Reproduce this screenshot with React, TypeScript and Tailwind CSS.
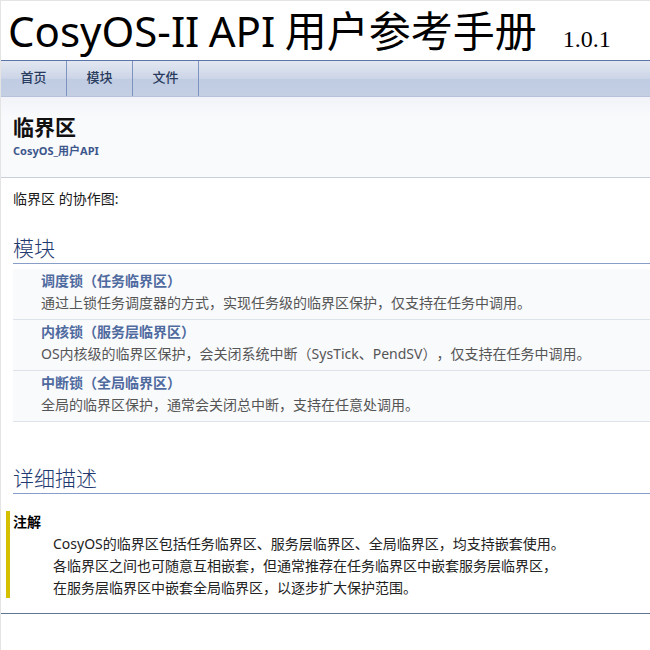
const FONT = "font-['Noto_Sans','Noto_Sans_CJK_SC',sans-serif]";

const tabs = ['首页', '模块', '文件'];

const modules = [
  { name: '调度锁（任务临界区）', desc: '通过上锁任务调度器的方式，实现任务级的临界区保护，仅支持在任务中调用。' },
  { name: '内核锁（服务层临界区）', desc: 'OS内核级的临界区保护，会关闭系统中断（SysTick、PendSV），仅支持在任务中调用。' },
  { name: '中断锁（全局临界区）', desc: '全局的临界区保护，通常会关闭总中断，支持在任意处调用。' },
];

function Heading({ children }: { children: string }) {
  return (
    <h2 className="ml-[12px] h-[29px] border-b border-[#879ecb] text-[21px] leading-[26px] font-light text-[#1f3a70]">
      {children}
    </h2>
  );
}

export default function App() {
  return (
    <div className={`${FONT} h-[650px] w-[650px] overflow-hidden border-t border-l border-[#e4e4e4] bg-white text-[#1a1a1a] [text-spacing-trim:space-all]`}>
      {/* title */}
      <div className="flex h-[59px] items-center pl-[7px] text-black">
        <span className="text-[42px] leading-[57px] [word-spacing:-1.5px]">CosyOS-II API 用户参考手册</span>
        <span className="mt-[17px] ml-[26px] font-['Liberation_Serif',serif] text-[24px] leading-none">1.0.1</span>
      </div>

      {/* tabs */}
      <nav className="flex h-[37px] border-t border-b border-t-[#5c75a8] border-b-[#b5c2da] bg-[linear-gradient(#e2e7f1_0%,#ccd5e7_50%,#c0cce2_52%,#c4cfe4_100%)]">
        {tabs.map((tab) => (
          <div key={tab} className="flex w-[66px] items-center justify-center border-r border-[#7d94c0] pb-[2px] text-[13px] font-medium text-[#283a5d]">
            {tab}
          </div>
        ))}
      </nav>

      {/* page header */}
      <header className="h-[81px] border-b border-[#c9cfda] bg-[linear-gradient(#f1f3f8_0px,#f9fafc_20px)] pl-[12px] pt-[15px]">
        <h1 className="text-[21px] leading-[30px] font-bold text-[#111]">临界区</h1>
        <div className="mt-[2px] text-[11px] leading-[14px] font-bold text-[#3d578c]">CosyOS_用户API</div>
      </header>

      <p className="mt-[12px] ml-[12px] text-[14px] leading-[18px]">临界区 的协作图:</p>

      <div className="mt-[27px]">
        <Heading>模块</Heading>
      </div>

      <div className="ml-[12px] mt-[5px]">
        {modules.map((m) => (
          <div key={m.name} className="h-[51px] border-b border-[#dee2ea] bg-[#f9fafc] pl-[28px] pt-[1px]">
            <div className="text-[14px] leading-[22px] font-bold text-[#4f6a9f]">{m.name}</div>
            <div className="text-[14px] leading-[22px] text-[#555]">{m.desc}</div>
          </div>
        ))}
      </div>

      <div className="mt-[43px]">
        <Heading>详细描述</Heading>
      </div>

      {/* note */}
      <div className="ml-[5px] mt-[17px] h-[87px] border-l-4 border-[#d5c000] pl-[3px]">
        <div className="text-[14px] leading-[22px] font-bold text-black">注解</div>
        <div className="ml-[40px] text-[14px] leading-[22px] text-[#222]">
          <p>CosyOS的临界区包括任务临界区、服务层临界区、全局临界区，均支持嵌套使用。</p>
          <p>各临界区之间也可随意互相嵌套，但通常推荐在任务临界区中嵌套服务层临界区，</p>
          <p>在服务层临界区中嵌套全局临界区，以逐步扩大保护范围。</p>
        </div>
      </div>

      <div className="mt-[15px] border-t border-[#5f7590]" />
    </div>
  );
}
